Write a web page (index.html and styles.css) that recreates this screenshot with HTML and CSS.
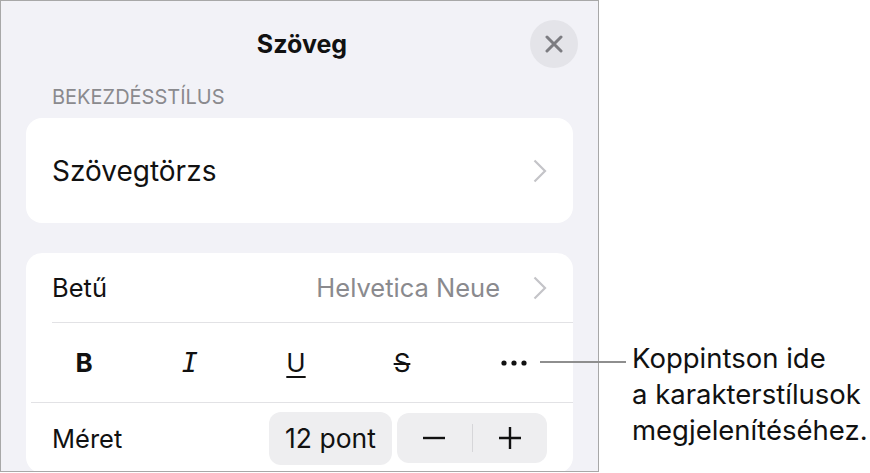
FILE: index.html
```html
<!DOCTYPE html>
<html lang="hu">
<head>
    <meta charset="UTF-8">
    <meta name="viewport" content="width=device-width, initial-scale=1.0">
    <title>Szöveg</title>
    <link rel="stylesheet" href="styles.css">
</head>
<body>
    <div class="page">
        <div class="panel">
            <div class="header">
                <span></span>
                <h1 class="title">Szöveg</h1>
                <button class="close" aria-label="Bezárás">
                    <svg width="18" height="18" viewBox="0 0 18 18">
                        <path d="M2 2 L16 16 M16 2 L2 16" stroke="#7c7c81" stroke-width="3" stroke-linecap="round"/>
                    </svg>
                </button>
            </div>
            <div class="section-label">BEKEZDÉSSTÍLUS</div>
            <div class="card style-card">
                <span class="big">Szövegtörzs</span>
                <svg class="chevron" width="14" height="24" viewBox="0 0 14 24">
                    <path d="M1.5 1.5 L12 12 L1.5 22.5" fill="none" stroke="#c4c4c8" stroke-width="2.2"/>
                </svg>
            </div>
            <div class="card font-card">
                <div class="row font-row">
                    <span>Betű</span>
                    <span class="value">Helvetica Neue</span>
                    <svg class="chevron" width="14" height="24" viewBox="0 0 14 24">
                        <path d="M1.5 1.5 L12 12 L1.5 22.5" fill="none" stroke="#c4c4c8" stroke-width="2.2"/>
                    </svg>
                </div>
                <div class="row format-row">
                    <span class="fmt bold">B</span>
                    <span class="fmt italic">I</span>
                    <span class="fmt underline">U</span>
                    <span class="fmt strike">S</span>
                    <span class="fmt more">
                        <svg width="26" height="6" viewBox="0 0 26 6">
                            <circle cx="3" cy="3" r="2.6" fill="#111"/>
                            <circle cx="13" cy="3" r="2.6" fill="#111"/>
                            <circle cx="23" cy="3" r="2.6" fill="#111"/>
                        </svg>
                    </span>
                </div>
                <div class="row size-row">
                    <span>Méret</span>
                    <span class="size-value">12 pont</span>
                    <div class="stepper">
                        <span class="step">
                            <svg width="24" height="24" viewBox="0 0 24 24">
                                <path d="M1 12 H23" stroke="#111" stroke-width="2.4"/>
                            </svg>
                        </span>
                        <span class="step-divider"></span>
                        <span class="step">
                            <svg width="24" height="24" viewBox="0 0 24 24">
                                <path d="M1 12 H23 M12 1 V23" stroke="#111" stroke-width="2.4"/>
                            </svg>
                        </span>
                    </div>
                </div>
            </div>
        </div>
        <div class="callout-line"></div>
        <p class="callout">Koppintson ide<br>a karakterstílusok<br>megjelenítéséhez.</p>
    </div>
</body>
</html>
```

FILE: styles.css
```css
body {
    margin: 0;
    background: #fff;
    font-family: Inter, "Liberation Sans", sans-serif;
    color: #111;
}
.page {
    position: relative;
    display: flex;
    width: 870px;
    height: 473px;
    overflow: hidden;
}
.panel {
    box-sizing: border-box;
    width: 599px;
    height: 472px;
    flex: none;
    border: 1px solid #a8a8a8;
    background-color: #f2f2f7;
    padding: 0 25px;
    overflow: hidden;
}
.header {
    display: grid;
    grid-template-columns: 1fr auto 1fr;
    align-items: center;
    margin: 19px -5px 0 0;
    height: 48px;
}
.title {
    margin: 0;
    font-size: 25px;
    font-weight: 650;
}
.close {
    justify-self: end;
    width: 48px;
    height: 48px;
    border: none;
    border-radius: 50%;
    background: #e4e4e9;
    display: flex;
    align-items: center;
    justify-content: center;
    padding: 0;
}
.section-label {
    margin: 17px 0 0 26px;
    font-size: 20px;
    color: #8a8a8e;
    line-height: 24px;
}
.card {
    background: #fff;
    border-radius: 16px;
}
.style-card {
    margin-top: 9px;
    height: 105px;
    display: flex;
    align-items: center;
    justify-content: space-between;
    padding: 0 26px 0 26px;
}
.big {
    font-size: 28px;
}
.font-card {
    margin-top: 30px;
    padding-left: 26px;
}
.row {
    display: flex;
    align-items: center;
    font-size: 25.5px;
}
.font-row {
    height: 69px;
    border-bottom: 1px solid #e2e2e5;
    padding-right: 26px;
}
.value {
    margin-left: auto;
    margin-right: 33px;
    color: #8a8a8e;
}
.format-row {
    display: grid;
    grid-template-columns: 106px 106px 106px 106px 118px;
    margin-left: -21px;
    height: 79px;
    border-bottom: 1px solid #e2e2e5;
}
.fmt {
    text-align: center;
    font-size: 26px;
}
.bold {
    font-weight: 700;
}
.italic {
    font-family: "DejaVu Sans Mono", monospace;
    font-style: oblique;
    font-size: 27px;
}
.underline {
    text-decoration: underline;
    text-underline-offset: 4px;
    text-decoration-thickness: 2px;
}
.strike {
    text-decoration: line-through;
    text-decoration-thickness: 2px;
}
.more {
    display: flex;
    justify-content: center;
}
.size-row {
    height: 70px;
    padding-right: 26px;
}
.size-value {
    margin-left: auto;
    background: #eeeef0;
    border-radius: 12px;
    height: 53px;
    width: 123px;
    font-size: 26.5px;
    display: flex;
    align-items: center;
    justify-content: center;
}
.stepper {
    margin-left: 5px;
    width: 150px;
    height: 50px;
    border-radius: 12px;
    background: #eeeef0;
    display: flex;
    align-items: center;
}
.step {
    flex: 1;
    display: flex;
    justify-content: center;
}
.step-divider {
    width: 1px;
    height: 28px;
    background: #d6d6d9;
}
.callout-line {
    position: absolute;
    left: 540px;
    top: 361px;
    width: 86px;
    height: 2px;
    background: #8e8e8e;
}
.callout {
    margin: 340px 0 0 33px;
    font-size: 27.5px;
    line-height: 36px;
    color: #111;
}
```
